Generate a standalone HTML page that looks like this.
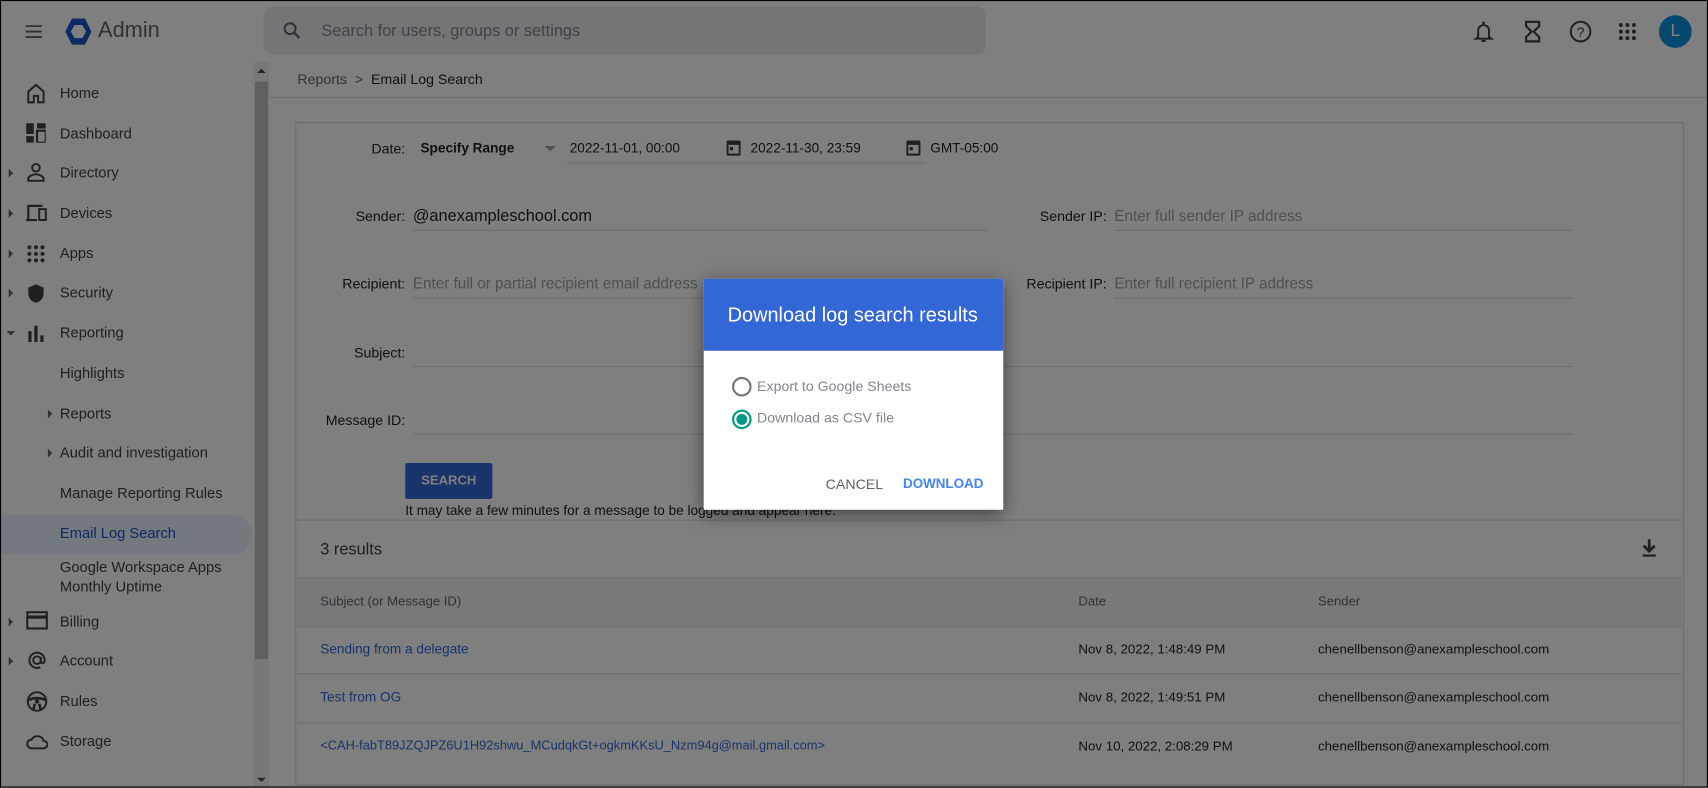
<!DOCTYPE html>
<html><head><meta charset="utf-8"><style>
html,body{margin:0;padding:0;width:1708px;height:788px;overflow:hidden;background:#808080}
#w{position:absolute;left:0;top:0;width:1568px;height:723px;transform:scale(1.08929);transform-origin:0 0;font-family:"Liberation Sans",sans-serif;color:#202124}
.t{position:absolute;white-space:nowrap;line-height:1}
.ln{position:absolute;height:1px;background:#9aa0a6}
.ic{position:absolute}
.nav{font-size:13.5px;color:#3c4043}
.arr{position:absolute;width:0;height:0;border-top:4px solid transparent;border-bottom:4px solid transparent;border-left:4px solid #5f6368}
.lab{position:absolute;font-size:13px;text-align:right;width:120px;line-height:1;color:#202124}
.ph{color:#9aa0a6;font-size:14px}
.row{position:absolute;left:272px;width:1272px;height:1px;background:#dadce0}
.td{font-size:12.2px;color:#202124}
.lk{font-size:12.5px;color:#3367d6}
#bg{position:absolute;left:0;top:0;width:1568px;height:723px;background:#fff}
#ov{position:absolute;left:0;top:0;width:1568px;height:723px;background:rgba(0,0,0,0.5);z-index:5}
#dlg{z-index:10}
</style></head><body><div id="w">
<div id="bg"></div>
<svg class="ic" style="left:21px;top:19px" width="20" height="20" viewBox="0 0 24 24"><path d="M3 6h18M3 12h18M3 18h18" stroke="#5f6368" stroke-width="2"/></svg>
<svg class="ic" style="left:58px;top:15px" width="28" height="28" viewBox="0 0 28 28"><polygon points="8,2 20,2 26,14 20,26 8,26 2,14" fill="#1a56c5"/><polygon points="10.5,8 17.5,8 21,14 17.5,20 10.5,20 7,14" fill="#fff"/></svg>
<div class="t" style="left:90px;top:18px;font-size:20px;color:#5f6368">Admin</div>
<div style="position:absolute;left:242px;top:6px;width:663px;height:44px;background:#e8eaed;border-radius:8px"></div>
<svg class="ic" style="left:258px;top:18px" width="20" height="20" viewBox="0 0 24 24"><circle cx="10" cy="10" r="6" stroke="#5f6368" stroke-width="2.2" fill="none"/><path d="M14.5 14.5L20 20" stroke="#5f6368" stroke-width="2.5"/></svg>
<div class="t" style="left:295px;top:21px;font-size:15px;color:#80868b">Search for users, groups or settings</div>
<svg class="ic" style="left:1352px;top:18px" width="20" height="22" viewBox="0 0 20 22"><path d="M5 16V10a5 5 0 0 1 10 0v6l2 1.5H3z" stroke="#3c4043" stroke-width="1.8" fill="none"/><circle cx="10" cy="3" r="1.3" fill="#3c4043"/><path d="M8 19.5h4" stroke="#3c4043" stroke-width="1.8"/></svg>
<svg class="ic" style="left:1398px;top:18px" width="18" height="22" viewBox="0 0 18 22"><path d="M3 2h12v4l-5 5 5 5v4H3v-4l5-5-5-5z" stroke="#3c4043" stroke-width="2" fill="none"/></svg>
<svg class="ic" style="left:1440px;top:18px" width="22" height="22" viewBox="0 0 22 22"><circle cx="11" cy="11" r="9" stroke="#3c4043" stroke-width="1.8" fill="none"/><text x="11" y="16" font-size="13" text-anchor="middle" fill="#3c4043" font-family="Liberation Sans">?</text></svg>
<svg class="ic" style="left:1485px;top:20px" width="18" height="18" viewBox="0 0 18 18" fill="#3c4043"><circle cx="3" cy="3" r="1.8"/><circle cx="9" cy="3" r="1.8"/><circle cx="15" cy="3" r="1.8"/><circle cx="3" cy="9" r="1.8"/><circle cx="9" cy="9" r="1.8"/><circle cx="15" cy="9" r="1.8"/><circle cx="3" cy="15" r="1.8"/><circle cx="9" cy="15" r="1.8"/><circle cx="15" cy="15" r="1.8"/></svg>
<div style="position:absolute;left:1523px;top:14px;width:30px;height:30px;border-radius:50%;background:#0a90e0;color:#fff;font-size:16px;line-height:30px;text-align:center">L</div>
<div style="position:absolute;left:0;top:473px;width:232px;height:36px;background:#e8f0fe;border-radius:0 18px 18px 0"></div>
<div class="t nav" style="left:55px;top:79px">Home</div>
<div class="t nav" style="left:55px;top:116px">Dashboard</div>
<div class="t nav" style="left:55px;top:152px">Directory</div>
<div class="t nav" style="left:55px;top:189px">Devices</div>
<div class="t nav" style="left:55px;top:226px">Apps</div>
<div class="t nav" style="left:55px;top:262px">Security</div>
<div class="t nav" style="left:55px;top:299px">Reporting</div>
<div class="t nav" style="left:55px;top:336px">Highlights</div>
<div class="t nav" style="left:55px;top:373px">Reports</div>
<div class="t nav" style="left:55px;top:409px">Audit and investigation</div>
<div class="t nav" style="left:55px;top:446px">Manage Reporting Rules</div>
<div class="t nav" style="left:55px;top:483px;color:#1a56c5">Email Log Search</div>
<div class="t nav" style="left:55px;top:514px">Google Workspace Apps</div>
<div class="t nav" style="left:55px;top:532px">Monthly Uptime</div>
<div class="t nav" style="left:55px;top:564px">Billing</div>
<div class="t nav" style="left:55px;top:600px">Account</div>
<div class="t nav" style="left:55px;top:637px">Rules</div>
<div class="t nav" style="left:55px;top:674px">Storage</div>
<div class="arr" style="left:8px;top:155px"></div><div class="arr" style="left:8px;top:192px"></div><div class="arr" style="left:8px;top:229px"></div><div class="arr" style="left:8px;top:265px"></div>
<div style="position:absolute;left:6px;top:304px;border-left:4px solid transparent;border-right:4px solid transparent;border-top:4px solid #5f6368"></div>
<div class="arr" style="left:44px;top:376px"></div><div class="arr" style="left:44px;top:412px"></div>
<div class="arr" style="left:8px;top:567px"></div><div class="arr" style="left:8px;top:603px"></div>
<svg class="ic" style="left:23px;top:76px" width="20" height="20" viewBox="0 0 20 20"><path d="M3 18V8l7-6 7 6v10h-5v-6H8v6z" stroke="#3c4043" stroke-width="1.8" fill="none"/></svg>
<svg class="ic" style="left:24px;top:113px" width="18" height="18" viewBox="0 0 18 18" fill="#3c4043"><rect x="0" y="0" width="7" height="10"/><rect x="10" y="0" width="8" height="5"/><rect x="0" y="12" width="7" height="6"/><rect x="10" y="7" width="8" height="11" fill="none" stroke="#3c4043" stroke-width="2"/></svg>
<svg class="ic" style="left:24px;top:149px" width="18" height="18" viewBox="0 0 18 18"><circle cx="9" cy="5" r="3.5" stroke="#3c4043" stroke-width="1.8" fill="none"/><path d="M2 17v-2c0-2 4-4 7-4s7 2 7 4v2z" stroke="#3c4043" stroke-width="1.8" fill="none"/></svg>
<svg class="ic" style="left:23px;top:187px" width="21" height="17" viewBox="0 0 21 17"><path d="M3 14V2h13M1 15h10" stroke="#3c4043" stroke-width="2" fill="none"/><rect x="13" y="5" width="6" height="10" stroke="#3c4043" stroke-width="1.8" fill="none"/></svg>
<svg class="ic" style="left:25px;top:225px" width="16" height="16" viewBox="0 0 16 16" fill="#3c4043"><circle cx="2" cy="2" r="1.8"/><circle cx="8" cy="2" r="1.8"/><circle cx="14" cy="2" r="1.8"/><circle cx="2" cy="8" r="1.8"/><circle cx="8" cy="8" r="1.8"/><circle cx="14" cy="8" r="1.8"/><circle cx="2" cy="14" r="1.8"/><circle cx="8" cy="14" r="1.8"/><circle cx="14" cy="14" r="1.8"/></svg>
<svg class="ic" style="left:25px;top:260px" width="16" height="19" viewBox="0 0 16 19"><path d="M8 1l7 3v5c0 5-3 8-7 9-4-1-7-4-7-9V4z" fill="#3c4043"/></svg>
<svg class="ic" style="left:25px;top:298px" width="16" height="16" viewBox="0 0 16 16" fill="#3c4043"><rect x="1" y="6" width="3" height="10"/><rect x="6.5" y="1" width="3" height="15"/><rect x="12" y="10" width="3" height="6"/></svg>
<svg class="ic" style="left:24px;top:561px" width="20" height="17" viewBox="0 0 20 17"><rect x="1" y="1" width="18" height="15" stroke="#3c4043" stroke-width="2" fill="none"/><rect x="1" y="4" width="18" height="3" fill="#3c4043"/></svg>
<svg class="ic" style="left:24px;top:596px" width="20" height="20" viewBox="0 0 20 20"><circle cx="10" cy="10" r="3.5" stroke="#3c4043" stroke-width="1.8" fill="none"/><path d="M13.5 7v4.5c0 2 3.5 2 3.5-1.5A7 7 0 1 0 13 16.5" stroke="#3c4043" stroke-width="1.8" fill="none"/></svg>
<svg class="ic" style="left:24px;top:634px" width="20" height="20" viewBox="0 0 20 20"><circle cx="10" cy="10" r="8.5" stroke="#3c4043" stroke-width="1.8" fill="none"/><circle cx="10" cy="10" r="2" fill="#3c4043"/><path d="M2 8.5c5-2 11-2 16 0M8 12l-1.5 6M12 12l1.5 6" stroke="#3c4043" stroke-width="2.5" fill="none"/></svg>
<svg class="ic" style="left:24px;top:673px" width="20" height="15" viewBox="0 0 20 15"><path d="M5 14a4 4 0 0 1 0-8 6 6 0 0 1 11 1 3.5 3.5 0 0 1 0 7z" stroke="#3c4043" stroke-width="1.8" fill="none"/></svg>
<div style="position:absolute;left:233px;top:57px;width:14px;height:666px;background:#f1f1f1"></div>
<div style="position:absolute;left:234px;top:75px;width:12px;height:530px;background:#c1c1c1"></div>
<div style="position:absolute;left:236px;top:63px;border-left:4px solid transparent;border-right:4px solid transparent;border-bottom:4px solid #505050"></div>
<div style="position:absolute;left:236px;top:714px;border-left:4px solid transparent;border-right:4px solid transparent;border-top:4px solid #505050"></div>
<div style="position:absolute;left:247px;top:57px;width:1321px;height:666px;background:#fff"></div>
<div class="t" style="left:273px;top:66px;font-size:13px;color:#5f6368">Reports&nbsp;&nbsp;&gt;&nbsp;&nbsp;<span style="color:#202124">Email Log Search</span></div>
<div class="ln" style="left:247px;top:89px;width:1321px;background:#dadce0"></div>
<div style="position:absolute;left:271px;top:112px;width:1273px;height:607px;border:1px solid #dadce0"></div>
<div class="lab" style="left:252px;top:130px">Date:</div>
<div class="t" style="left:386px;top:130px;font-size:12.5px;font-weight:bold;color:#202124">Specify Range</div>
<div style="position:absolute;left:500px;top:134px;border-left:5px solid transparent;border-right:5px solid transparent;border-top:5px solid #9aa0a6"></div>
<div class="t" style="left:523px;top:130px;font-size:12.5px">2022-11-01, 00:00</div>
<svg class="ic" style="left:667px;top:128px" width="13" height="15" viewBox="0 0 13 15"><rect x="0" y="1" width="13" height="14" rx="1.5" fill="#3c4043"/><rect x="1.8" y="5" width="9.4" height="8" fill="#fff"/><rect x="3" y="7" width="3" height="3" fill="#3c4043"/></svg>
<div class="t" style="left:689px;top:130px;font-size:12.5px">2022-11-30, 23:59</div>
<svg class="ic" style="left:832px;top:128px" width="13" height="15" viewBox="0 0 13 15"><rect x="0" y="1" width="13" height="14" rx="1.5" fill="#3c4043"/><rect x="1.8" y="5" width="9.4" height="8" fill="#fff"/><rect x="3" y="7" width="3" height="3" fill="#3c4043"/></svg>
<div class="t" style="left:854px;top:130px;font-size:12.5px">GMT-05:00</div>
<div class="ln" style="left:520px;top:149px;width:330px;background:#dadce0"></div>
<div class="lab" style="left:252px;top:192px">Sender:</div>
<div class="t" style="left:379px;top:191px;font-size:15px">@anexampleschool.com</div>
<div class="ln" style="left:379px;top:211px;width:528px;background:#dadce0"></div>
<div class="lab" style="left:896px;top:192px">Sender IP:</div>
<div class="t ph" style="left:1023px;top:191px">Enter full sender IP address</div>
<div class="ln" style="left:1023px;top:211px;width:421px;background:#dadce0"></div>
<div class="lab" style="left:252px;top:254px">Recipient:</div>
<div class="t ph" style="left:379px;top:253px">Enter full or partial recipient email address</div>
<div class="ln" style="left:379px;top:273px;width:528px;background:#dadce0"></div>
<div class="lab" style="left:896px;top:254px">Recipient IP:</div>
<div class="t ph" style="left:1023px;top:253px">Enter full recipient IP address</div>
<div class="ln" style="left:1023px;top:273px;width:421px;background:#dadce0"></div>
<div class="lab" style="left:252px;top:317px">Subject:</div>
<div class="ln" style="left:379px;top:336px;width:1065px;background:#dadce0"></div>
<div class="lab" style="left:252px;top:379px">Message ID:</div>
<div class="ln" style="left:379px;top:398px;width:1065px;background:#dadce0"></div>
<div style="position:absolute;left:372px;top:425px;width:80px;height:33px;background:#3367d6;border-radius:2px;color:#fff;font-size:12px;font-weight:bold;text-align:center;line-height:33px">SEARCH</div>
<div class="t" style="left:372px;top:463px;font-size:12.5px">It may take a few minutes for a message to be logged and appear here.</div>
<div class="row" style="top:477px"></div>
<div class="t" style="left:294px;top:497px;font-size:15px;color:#3c4043">3 results</div>
<svg class="ic" style="left:1506px;top:494px" width="16" height="18" viewBox="0 0 16 18"><path d="M8 1v10M3 7l5 5 5-5" stroke="#3c4043" stroke-width="2.5" fill="none"/><rect x="2" y="15" width="12" height="2" fill="#3c4043"/></svg>
<div style="position:absolute;left:272px;top:530px;width:1272px;height:44px;background:#f1f3f4;border-top:1px solid #dadce0;border-bottom:1px solid #dadce0"></div>
<div class="t" style="left:294px;top:546px;font-size:12px;color:#5f6368">Subject (or Message ID)</div>
<div class="t" style="left:990px;top:546px;font-size:12px;color:#5f6368">Date</div>
<div class="t" style="left:1210px;top:546px;font-size:12px;color:#5f6368">Sender</div>
<div class="t lk" style="left:294px;top:590px">Sending from a delegate</div>
<div class="t td" style="left:990px;top:590px">Nov 8, 2022, 1:48:49 PM</div>
<div class="t td" style="left:1210px;top:590px">chenellbenson@anexampleschool.com</div>
<div class="row" style="top:618px"></div>
<div class="t lk" style="left:294px;top:634px">Test from OG</div>
<div class="t td" style="left:990px;top:634px">Nov 8, 2022, 1:49:51 PM</div>
<div class="t td" style="left:1210px;top:634px">chenellbenson@anexampleschool.com</div>
<div class="row" style="top:663px"></div>
<div class="t lk" style="left:294px;top:679px;font-size:11.8px">&lt;CAH-fabT89JZQJPZ6U1H92shwu_MCudqkGt+ogkmKKsU_Nzm94g@mail.gmail.com&gt;</div>
<div class="t td" style="left:990px;top:679px">Nov 10, 2022, 2:08:29 PM</div>
<div class="t td" style="left:1210px;top:679px">chenellbenson@anexampleschool.com</div>
<div id="ov"></div>
<div style="position:absolute;left:0;top:0;width:1566px;height:721px;border:1px solid #000;z-index:6"></div>
<div id="dlg" style="position:absolute;left:646px;top:256px;width:275px;height:212px;background:#fff;box-shadow:0 4px 16px rgba(0,0,0,.5)">
<div style="height:66px;background:#3367d6"></div>
<div class="t" style="left:22px;top:24px;font-size:18.3px;color:#fff">Download log search results</div>
<div style="position:absolute;left:26px;top:90px;width:14px;height:14px;border:2px solid #757575;border-radius:50%"></div>
<div class="t" style="left:49px;top:92px;font-size:13px;color:#80868b">Export to Google Sheets</div>
<div style="position:absolute;left:26px;top:120px;width:14px;height:14px;border:2px solid #009688;border-radius:50%"></div>
<div style="position:absolute;left:30px;top:124px;width:10px;height:10px;background:#009688;border-radius:50%"></div>
<div class="t" style="left:49px;top:121px;font-size:13px;color:#80868b">Download as CSV file</div>
<div class="t" style="left:112px;top:182px;font-size:13px;color:#5f6368">CANCEL</div>
<div class="t" style="left:183px;top:182px;font-size:12.3px;font-weight:bold;color:#4285f4">DOWNLOAD</div>
</div>
</div></body></html>
